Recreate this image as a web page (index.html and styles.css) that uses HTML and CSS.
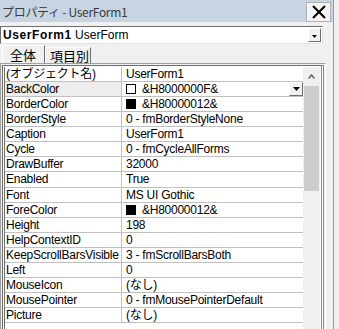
FILE: index.html
```html
<!DOCTYPE html>
<html lang="ja">
<head>
  <meta charset="UTF-8" />
  <title>プロパティ - UserForm1</title>
  <link rel="stylesheet" href="styles.css">
</head>
<body>
  <div class="window">
    <div class="titlebar">
      <span class="title">プロパティ - UserForm1</span>
      <button class="close" aria-label="閉じる">
        <svg width="14" height="14" viewBox="0 0 14 14"><path d="M1 1 L13 13 M13 1 L1 13" stroke="#000" stroke-width="2"/></svg>
      </button>
    </div>

    <div class="combo">
      <span class="combo-text"><b>UserForm1</b> UserForm</span>
      <span class="drop-btn"><svg width="5" height="3" viewBox="0 0 5 3"><path d="M0 0 H5 L2.5 3 Z" fill="#000"/></svg></span>
    </div>

    <div class="tabs">
      <div class="tab active">全体</div>
      <div class="tab">項目別</div>
    </div>

    <div class="grid-frame">
      <div class="grid">
        <div class="rows">
          <div class="row"><div class="name">(オブジェクト名)</div><div class="value">UserForm1</div></div>
          <div class="row selected"><div class="name">BackColor</div><div class="value"><span class="swatch"></span>&amp;H8000000F&amp;<span class="cell-drop"><svg width="7" height="4" viewBox="0 0 7 4"><path d="M0 0 H7 L3.5 4 Z" fill="#000"/></svg></span></div></div>
          <div class="row"><div class="name">BorderColor</div><div class="value"><span class="swatch dark"></span>&amp;H80000012&amp;</div></div>
          <div class="row"><div class="name">BorderStyle</div><div class="value">0 - fmBorderStyleNone</div></div>
          <div class="row"><div class="name">Caption</div><div class="value">UserForm1</div></div>
          <div class="row"><div class="name">Cycle</div><div class="value">0 - fmCycleAllForms</div></div>
          <div class="row"><div class="name">DrawBuffer</div><div class="value">32000</div></div>
          <div class="row"><div class="name">Enabled</div><div class="value">True</div></div>
          <div class="row"><div class="name">Font</div><div class="value">MS UI Gothic</div></div>
          <div class="row"><div class="name">ForeColor</div><div class="value"><span class="swatch dark"></span>&amp;H80000012&amp;</div></div>
          <div class="row"><div class="name">Height</div><div class="value">198</div></div>
          <div class="row"><div class="name">HelpContextID</div><div class="value">0</div></div>
          <div class="row"><div class="name">KeepScrollBarsVisible</div><div class="value">3 - fmScrollBarsBoth</div></div>
          <div class="row"><div class="name">Left</div><div class="value">0</div></div>
          <div class="row"><div class="name">MouseIcon</div><div class="value">(なし)</div></div>
          <div class="row"><div class="name">MousePointer</div><div class="value">0 - fmMousePointerDefault</div></div>
          <div class="row"><div class="name">Picture</div><div class="value">(なし)</div></div>
        </div>
        <div class="scrollbar">
          <span class="arrow-up"><svg width="7" height="5" viewBox="0 0 7 5"><path d="M0.5 4.5 L3.5 1 L6.5 4.5" fill="none" stroke="#606060" stroke-width="1.5"/></svg></span>
          <div class="thumb"></div>
          <div class="track"></div>
          <span class="arrow-down"><svg width="7" height="5" viewBox="0 0 7 5"><path d="M0.5 0.5 L3.5 4 L6.5 0.5" fill="none" stroke="#606060" stroke-width="1.5"/></svg></span>
        </div>
      </div>
    </div>
  </div>
</body>
</html>
```

FILE: styles.css
```css
* { box-sizing: border-box; }
body {
  margin: 0;
  background: #f0f0f0;
  font-family: "Liberation Sans", "Noto Sans CJK JP", sans-serif;
  font-size: 12px;
  overflow: hidden;
}

.window {
  width: 334px;
  height: 329px;
  border-right: 1px solid #9a9a9a;
  overflow: hidden;
}

/* Title bar */
.titlebar {
  height: 22px;
  background: #c7d5e3;
  display: flex;
  align-items: center;
  justify-content: space-between;
  padding: 0 2px 0 2px;
}
.title {
  color: #3a3a3a;
  font-size: 12px;
  font-family: "Noto Sans CJK JP", sans-serif;
  letter-spacing: -0.3px;
}
.close {
  width: 25px;
  height: 20px;
  margin-top: 1px;
  padding: 0;
  border: 1px solid #b0b0b0;
  background: #f4f4f4;
  display: flex;
  align-items: center;
  justify-content: center;
}

/* Object combo */
.combo {
  margin-top: 4px;
  width: 323px;
  height: 18px;
  background: #fff;
  border-top: 1px solid #6d6d6d;
  border-left: 1px solid #6d6d6d;
  border-bottom: 1px solid #e3e3e3;
  border-right: 1px solid #e3e3e3;
  display: flex;
  align-items: center;
  justify-content: space-between;
  padding-left: 2px;
}
.combo-text { font-size: 12px; }
.combo-text b { letter-spacing: 0.6px; }
.drop-btn {
  width: 13px;
  height: 14px;
  margin-right: 1px;
  background: #f0f0f0;
  border: 1px solid;
  border-color: #fff #6d6d6d #6d6d6d #fff;
  display: flex;
  align-items: center;
  justify-content: center;
  padding-top: 2px;
}

/* Tabs */
.tabs {
  display: flex;
  align-items: flex-end;
  height: 18px;
  margin-top: 1px;
  padding-left: 2px;
}
.tab {
  font-family: "Noto Sans CJK JP", sans-serif;
  font-size: 13px;
  width: 46px;
  height: 16px;
  line-height: 15px;
  padding-left: 4px;
  border: 1px solid #fff;
  border-right-color: #6d6d6d;
  border-bottom: none;
  white-space: nowrap;
}
.tab.active {
  width: 43px;
  height: 18px;
  line-height: 17px;
  padding-left: 7px;
}

/* Property grid */
.grid-frame {
  width: 326px;
  height: 281px;
  border: 1px solid;
  border-color: #a0a0a0 #fff #fff #a0a0a0;
  padding: 1px;
}
.grid {
  height: 100%;
  border: 1px solid;
  border-color: #6d6d6d #e3e3e3 #e3e3e3 #6d6d6d;
  border-right: 3px double #8a8a8a;
  background: #fff;
  display: flex;
  padding: 1px 1px 0 1px;
}
.rows {
  flex: 1;
  border-left: 1px solid #6d6d6d;
}
.row {
  display: flex;
  height: 15.07px;
  border-bottom: 1px solid #c0c0c0;
  line-height: 14px;
  font-size: 12px;
  letter-spacing: -0.25px;
  white-space: nowrap;
}
.name {
  width: 117px;
  padding-left: 1px;
  border-right: 1px solid #c0c0c0;
  overflow: hidden;
}
.row.selected .name { background: #ededed; }
.value {
  flex: 1;
  padding-left: 4px;
  display: flex;
  align-items: center;
  overflow: hidden;
}
.swatch {
  width: 10px;
  height: 10px;
  border: 1px solid #000;
  background: #fff;
  margin-right: 6px;
}
.swatch.dark { background: #000; }
.cell-drop {
  margin-left: auto;
  width: 14px;
  height: 14px;
  background: #f0f0f0;
  border: 1px solid;
  border-color: #fff #6d6d6d #6d6d6d #fff;
  display: flex;
  align-items: center;
  justify-content: center;
}

/* Scrollbar */
.scrollbar {
  width: 17px;
  background: #f0f0f0;
  display: flex;
  flex-direction: column;
  align-items: center;
}
.arrow-up, .arrow-down {
  height: 19px;
  display: flex;
  align-items: center;
}
.thumb {
  width: 15px;
  height: 105px;
  background: #cdcdcd;
}
.track { flex: 1; }
```
